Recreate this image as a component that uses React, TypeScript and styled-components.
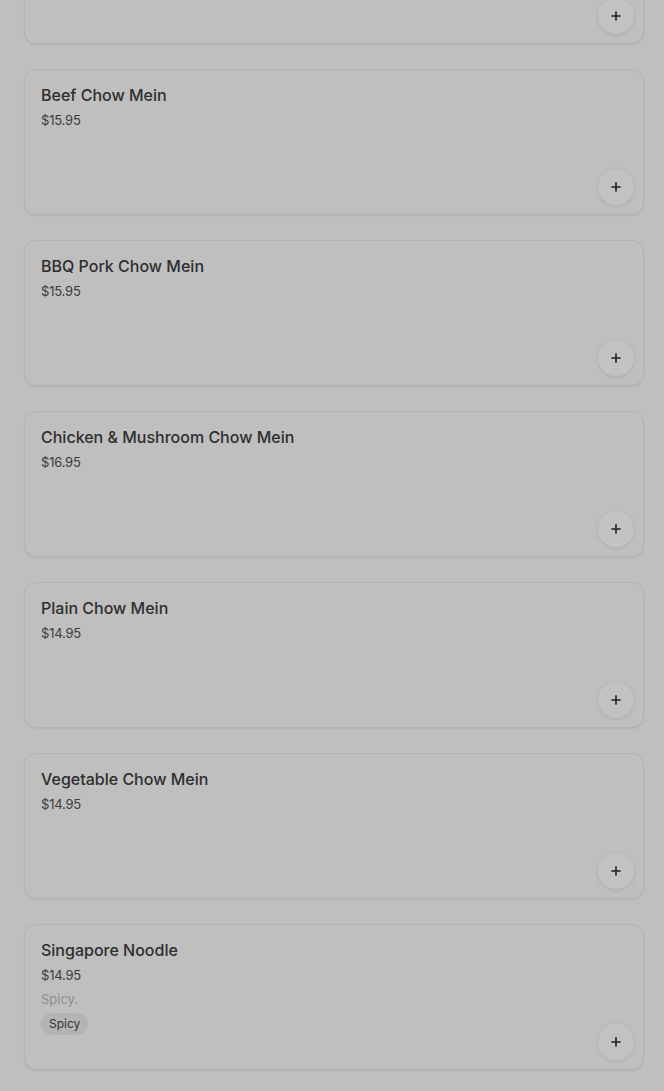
import React from 'react'
import styled, { createGlobalStyle } from 'styled-components'
import { Plus } from 'lucide-react'

const GlobalStyle = createGlobalStyle`
  html, body {
    margin: 0;
    padding: 0;
    background: #bfbfbf;
    font-family: Inter, "Noto Sans", sans-serif;
    -webkit-font-smoothing: antialiased;
  }
`

const Page = styled.main`
  height: 1091px;
  overflow: hidden;
  padding: 0 20px 0 24px;
`

const List = styled.div`
  display: flex;
  flex-direction: column;
  gap: 25px;
  margin-top: -102px;
`

const Card = styled.article`
  position: relative;
  box-sizing: border-box;
  min-height: 146px;
  padding: 14px 16px;
  border: 1px solid #b3b3b3;
  border-radius: 12px;
  background: #bfbfbf;
  box-shadow: 0 1px 2px rgba(0, 0, 0, 0.06);
`

const Title = styled.h2`
  margin: 0;
  font-size: 16px;
  line-height: 22px;
  font-weight: 500;
  color: #2e2e2e;
`

const Price = styled.div`
  margin-top: 4px;
  font-size: 13px;
  line-height: 20px;
  color: #3c3c3c;
  letter-spacing: -0.2px;
`

const Description = styled.p`
  margin: 4px 0 0;
  font-size: 13px;
  line-height: 20px;
  color: #8e8e8e;
`

const Tags = styled.div`
  display: flex;
  gap: 6px;
  margin-top: 4px;
`

const Tag = styled.span`
  padding: 3px 8px;
  border-radius: 999px;
  background: #b4b4b4;
  font-size: 12px;
  line-height: 16px;
  color: #333;
`

const AddButton = styled.button`
  position: absolute;
  right: 9px;
  bottom: 9px;
  width: 36px;
  height: 36px;
  padding: 0;
  border: none;
  border-radius: 50%;
  background: #c2c2c2;
  box-shadow: 0 1px 4px rgba(0, 0, 0, 0.1);
  color: #222;
  display: flex;
  align-items: center;
  justify-content: center;
`

type Item = {
  name: string
  price: string
  description?: string
  tags?: string[]
}

const items: Item[] = [
  { name: 'Shrimp Chow Mein', price: '$16.95' },
  { name: 'Beef Chow Mein', price: '$15.95' },
  { name: 'BBQ Pork Chow Mein', price: '$15.95' },
  { name: 'Chicken & Mushroom Chow Mein', price: '$16.95' },
  { name: 'Plain Chow Mein', price: '$14.95' },
  { name: 'Vegetable Chow Mein', price: '$14.95' },
  {
    name: 'Singapore Noodle',
    price: '$14.95',
    description: 'Spicy.',
    tags: ['Spicy'],
  },
]

const App = () => (
  <>
    <GlobalStyle />
    <Page>
      <List>
        {items.map(item => (
          <Card key={item.name}>
            <Title>{item.name}</Title>
            <Price>{item.price}</Price>
            {item.description && <Description>{item.description}</Description>}
            {item.tags && (
              <Tags>
                {item.tags.map(tag => (
                  <Tag key={tag}>{tag}</Tag>
                ))}
              </Tags>
            )}
            <AddButton aria-label={`Add ${item.name}`}>
              <Plus size={14} strokeWidth={2.8} />
            </AddButton>
          </Card>
        ))}
      </List>
    </Page>
  </>
)

export default App
